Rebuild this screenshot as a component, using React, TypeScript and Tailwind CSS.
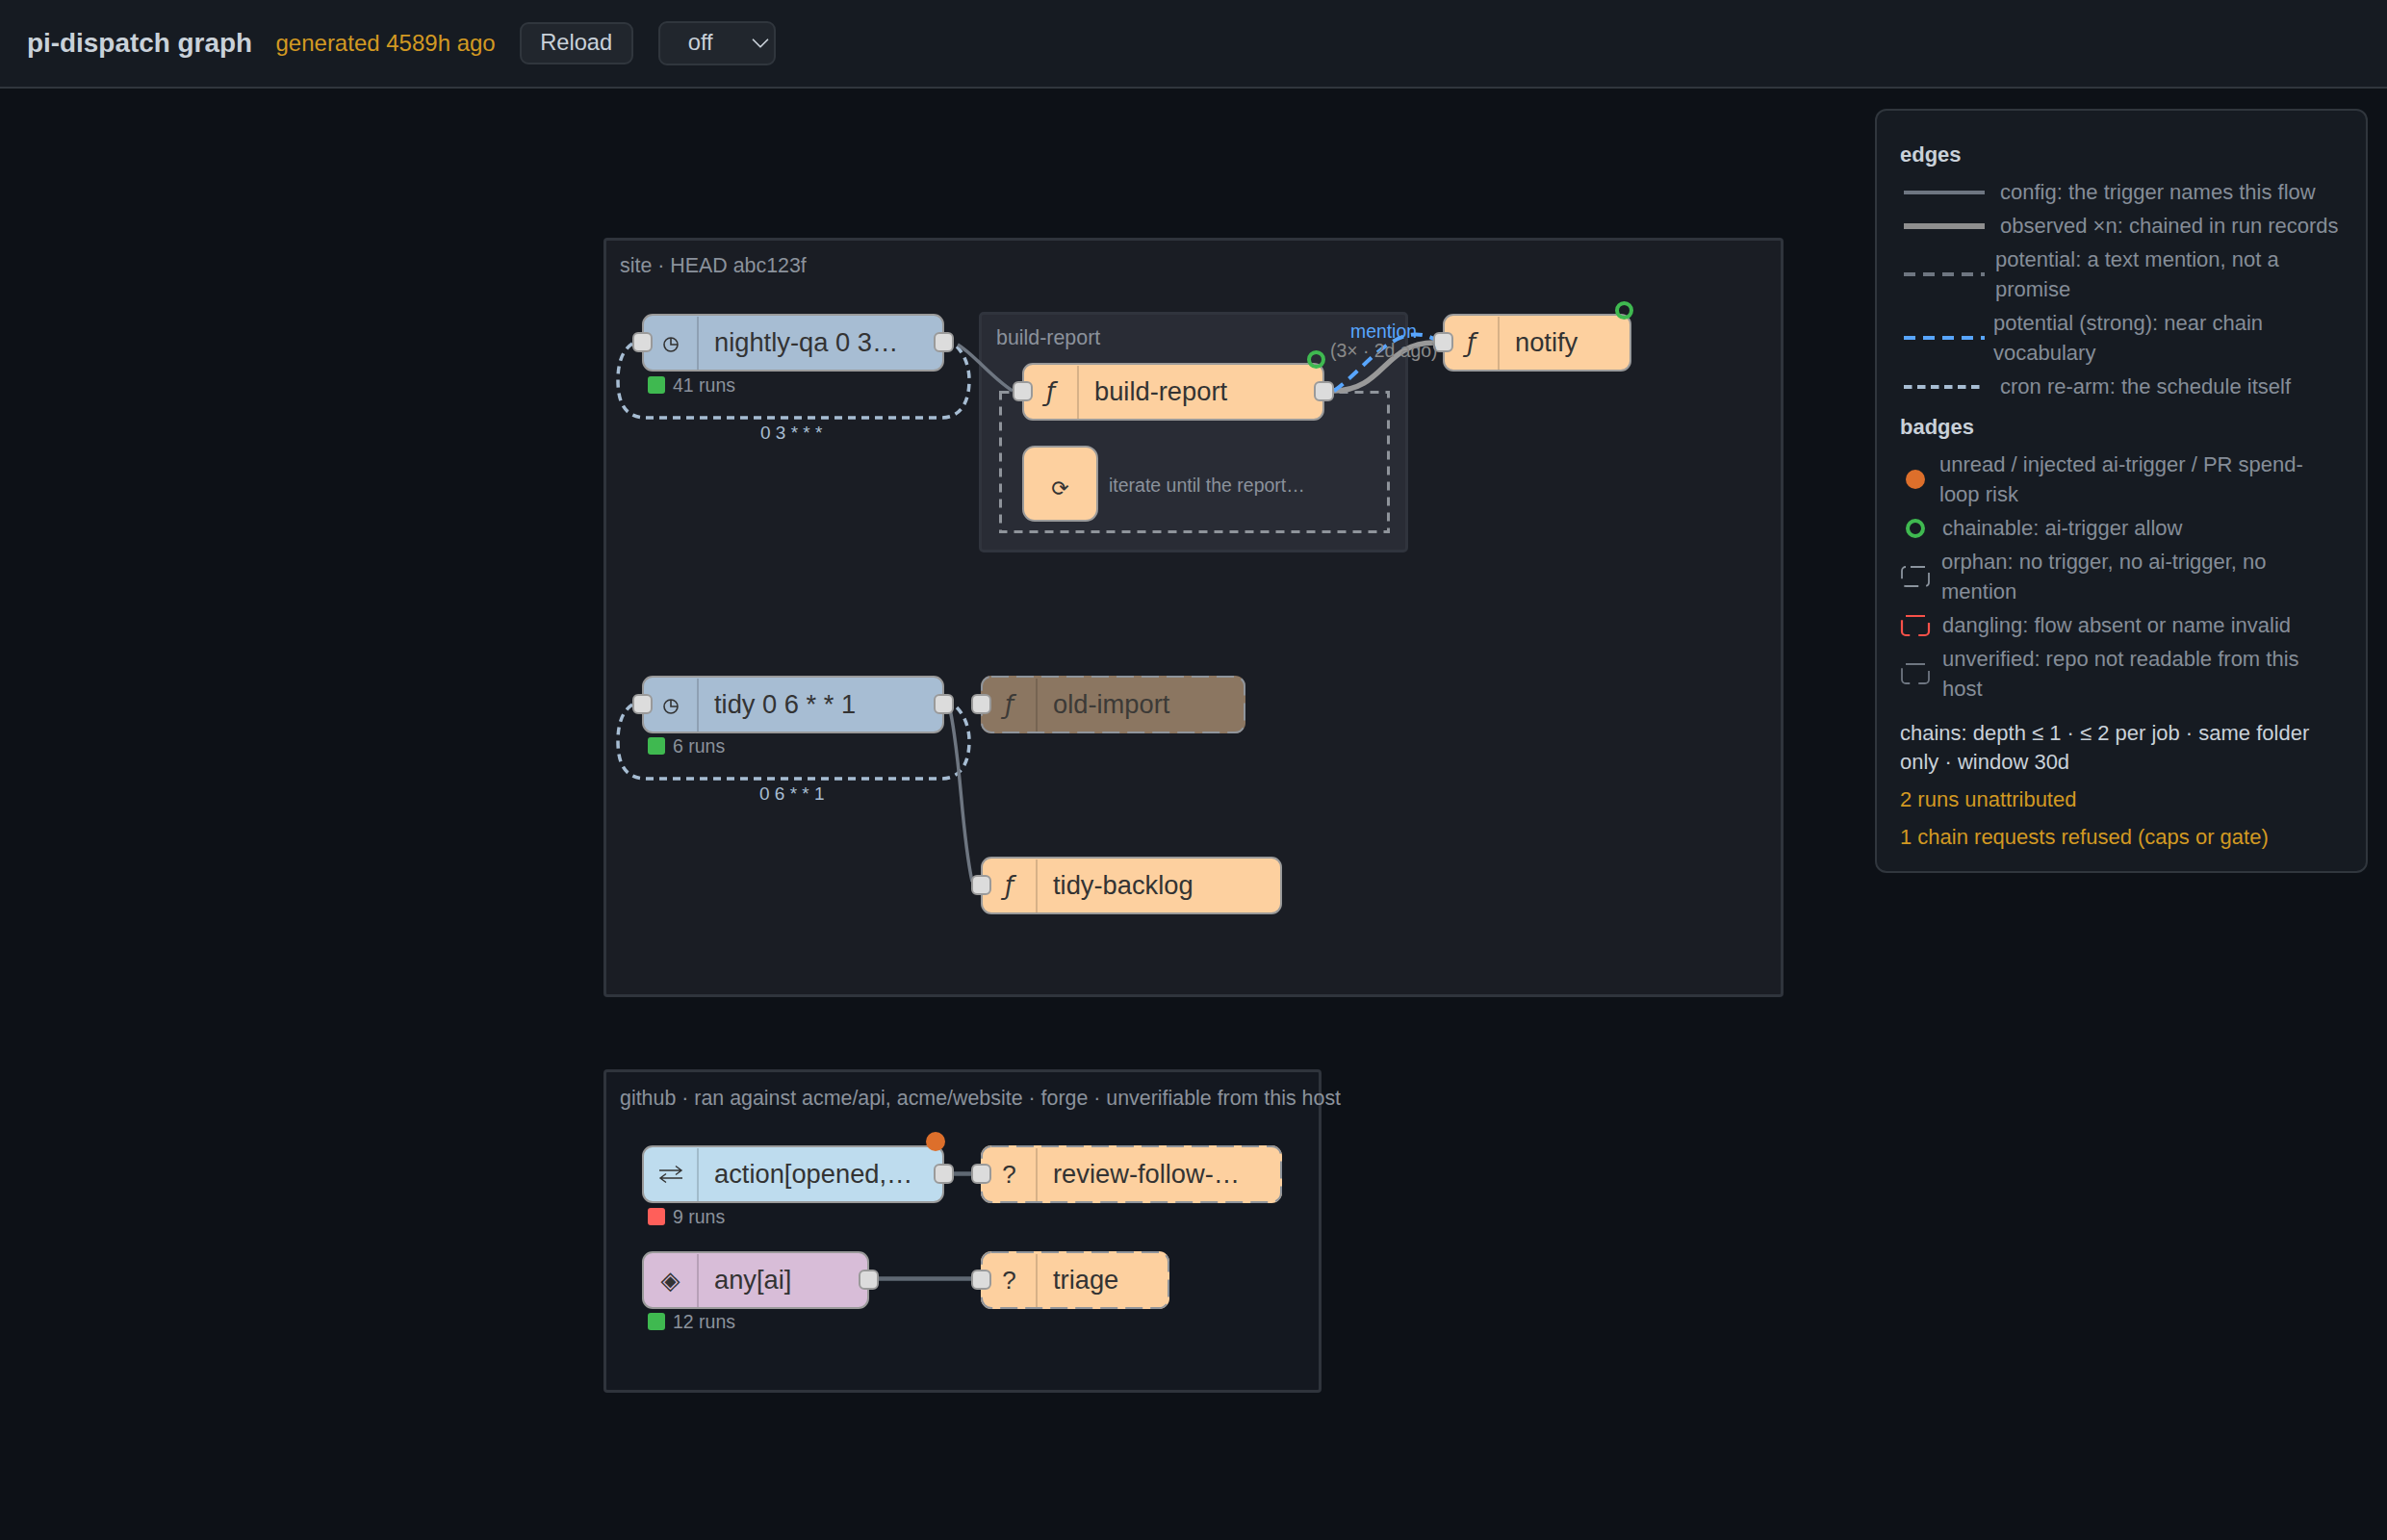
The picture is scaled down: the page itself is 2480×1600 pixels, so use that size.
import type { ReactNode } from 'react';
import { ChevronDown } from 'lucide-react';

const FLOW = 'bg-[#fdd09f]';
const CRON = 'bg-[#a7bdd3]';

function Handle({ className }: { className: string }) {
  return <div className={`absolute top-[17px] h-[21px] w-[21px] rounded-[6px] border-2 border-[#9a9a9a] bg-[#dcdcdc] ${className}`} />;
}

function ClockIcon() {
  return (
    <svg width="18" height="18" viewBox="0 0 18 18" fill="none" stroke="#333" strokeWidth="1.6" className="mt-[4px]">
      <circle cx="9" cy="9" r="7" />
      <path d="M9 2v7h7" />
    </svg>
  );
}

function SwapIcon() {
  return (
    <svg width="26" height="20" viewBox="0 0 26 20" fill="none" stroke="#333" strokeWidth="1.4">
      <path d="M1 6H24M18 1.5l6 4.5-6 4.5" />
      <path d="M25 14H2M8 9.5l-6 4.5 6 4.5" />
    </svg>
  );
}

function Node({
  pos, color, icon, label, w, dashed, left = true, right = false, dim,
}: {
  pos: string; color: string; icon: ReactNode; label: string; w: number;
  dashed?: boolean; left?: boolean; right?: boolean; dim?: boolean;
}) {
  return (
    <div className={`absolute z-20 h-[60px] rounded-[11px] ${pos} ${color} border-2 ${dashed ? 'border-transparent' : 'border-[#9a9a9a]'}`}>
      {dashed && (
        <svg className="absolute -top-[2px] -left-[2px]" width={w} height={60} fill="none">
          <rect x="1" y="1" width={w - 2} height="58" rx="10" stroke="#8f949b" strokeWidth="2" strokeDasharray="18 8" />
        </svg>
      )}
      <div className={`flex h-full items-center ${dim ? 'text-[#3c3a37]' : 'text-[#333333]'}`}>
        <div className="flex h-[55px] w-[57px] shrink-0 items-center justify-center border-r-2 border-[#00000026] text-[26px] leading-none [font-family:'DejaVu_Sans',sans-serif]">
          {icon}
        </div>
        <span className="pl-[16px] text-[27.3px] whitespace-nowrap">{label}</span>
      </div>
      {left && <Handle className="-left-[12px]" />}
      {right && <Handle className="-right-[12px]" />}
    </div>
  );
}

function Runs({ pos, color, label }: { pos: string; color: string; label: string }) {
  return (
    <div className={`absolute z-20 flex items-center gap-[8px] text-[19.5px] leading-[18px] text-[#8b929c] ${pos}`}>
      <div className={`h-[18px] w-[18px] rounded-[3px] ${color}`} />
      <span>{label}</span>
    </div>
  );
}

function EdgeRow({ line, text, textClass }: { line: ReactNode; text: string; textClass: string }) {
  return (
    <div className="flex items-center pl-[4px]">
      <svg width="84" height="8" className="shrink-0" viewBox="0 0 84 8">{line}</svg>
      <span className={`min-w-0 ${textClass}`}>{text}</span>
    </div>
  );
}

function BadgeRow({ icon, text, textClass }: { icon: ReactNode; text: string; textClass: string }) {
  return (
    <div className="flex items-center">
      <svg width="32" height="24" className="shrink-0" viewBox="0 0 32 24" fill="none">{icon}</svg>
      <span className={`min-w-0 ${textClass}`}>{text}</span>
    </div>
  );
}

const CRON_LOOP = 'C645 365 642 380 642 395 C642 420 650 434 672 434 L978 434 C1000 434 1007 415 1007 395 C1007 378 1000 365 992 358';

export default function App() {
  return (
    <div className="flex h-[1600px] w-[2480px] flex-col overflow-hidden bg-[#0d1117] [font-family:'Liberation_Sans',Arial,sans-serif]">
      <header className="flex h-[92px] shrink-0 items-center border-b-2 border-[#30363d] bg-[#161b22] pl-[28px]">
        <h1 className="text-[27.9px] font-bold text-[#c9d1d9]">pi-dispatch graph</h1>
        <span className="ml-[24.5px] text-[24px] text-[#d29922]">generated 4589h ago</span>
        <button className="ml-[25px] h-[44px] w-[118px] rounded-[9px] border-2 border-[#30363d] bg-[#21262d] text-[23.7px] text-[#c9d1d9]">Reload</button>
        <div className="relative ml-[26px] h-[46px] w-[122px]">
          <select className="h-full w-full appearance-none rounded-[9px] border-2 border-[#30363d] bg-[#21262d] pl-[29px] text-[23.7px] text-[#c9d1d9]">
            <option>off</option>
          </select>
          <ChevronDown className="pointer-events-none absolute top-[8px] right-[1px] text-[#c9d1d9]" size={30} strokeWidth={1.4} />
        </div>
      </header>

      <main className="relative flex-1">
        {/* frames */}
        <section className="absolute top-[155px] left-[627px] h-[789px] w-[1226px] rounded-[4px] border-[3px] border-[#2f343c] bg-[#1a1d24] px-[14px] pt-[10px] text-[21.4px] text-[#8b929c]">
          site · HEAD abc123f
        </section>
        <section className="absolute top-[1019px] left-[627px] h-[336px] w-[746px] rounded-[4px] border-[3px] border-[#2f343c] bg-[#141820] pt-[11px] pl-[14px] text-[21.4px] whitespace-nowrap text-[#8b929c]">
          github · ran against acme/api, acme/website · forge · unverifiable from this host
        </section>
        <section className="absolute top-[232px] left-[1017px] h-[250px] w-[446px] rounded-[5px] border-[3px] border-[#30343d] bg-[#292c35] pt-[8px] pl-[15px] text-[21.4px] text-[#8b929c]">
          build-report
        </section>

        {/* edges */}
        <svg className="pointer-events-none absolute top-0 left-0 z-10" width="2480" height="1508" viewBox="0 92 2480 1508" fill="none">
          <rect x="1039.5" y="407.5" width="403" height="145" stroke="#8f949b" strokeWidth="3" strokeDasharray="9 7" />
          <path d={`M657 357 ${CRON_LOOP}`} stroke="#a7bdd3" strokeWidth="3.5" strokeDasharray="8 6" />
          <path d={`M657 357 ${CRON_LOOP}`} transform="translate(0 375)" stroke="#a7bdd3" strokeWidth="3.5" strokeDasharray="8 6" />
          <path d="M995 358 C1012 368 1030 392 1052 406" stroke="#6e7681" strokeWidth="3.5" />
          <path d="M1386 406 C1438 406 1438 356 1490 356" stroke="#999999" strokeWidth="5.5" />
          <path d="M1386 406 C1420 382 1450 332 1490 352" stroke="#58a6ff" strokeWidth="4" strokeDasharray="12 8" />
          <path d="M986 732 C999 790 998 860 1010 916" stroke="#6e7681" strokeWidth="3.5" />
          <path d="M991 1219.5 L1009 1219.5" stroke="#5f6873" strokeWidth="4.5" />
          <path d="M913 1328.5 L1009 1328.5" stroke="#5f6873" strokeWidth="4.5" />
        </svg>

        {/* edge labels */}
        <span className="absolute top-[241px] left-[1403px] z-30 text-[19.4px] leading-[22px] text-[#58a6ff]">mention</span>
        <span className="absolute top-[261px] left-[1382px] z-30 text-[19.4px] leading-[22px] text-[#8a8a8a]">(3× · 2d ago)</span>
        <span className="absolute top-[347px] left-[790px] z-20 text-[19px] leading-[22px] text-[#a7bdd3]">0 3 * * *</span>
        <span className="absolute top-[722px] left-[789px] z-20 text-[19px] leading-[22px] text-[#a7bdd3]">0 6 * * 1</span>

        {/* nodes */}
        <Node pos="top-[234px] left-[667px] w-[314px]" w={314} color={CRON} icon={<ClockIcon />} label="nightly-qa 0 3…" right />
        <Runs pos="top-[299px] left-[673px]" color="bg-[#3fb950]" label="41 runs" />

        <Node pos="top-[285px] left-[1062px] w-[314px]" w={314} color={FLOW} icon={<span className="italic">ƒ</span>} label="build-report" right />
        <div className="absolute top-[371px] left-[1062px] z-20 flex h-[79px] w-[79px] items-center justify-center rounded-[13px] border-2 border-[#9a9a9a] bg-[#fdd09f] pt-[10px] text-[22px] text-[#333333] [font-family:'DejaVu_Sans',sans-serif]">⟳</div>
        <span className="absolute top-[400px] left-[1152px] z-20 text-[19.5px] leading-[24px] text-[#8b929c]">iterate until the report…</span>
        <Node pos="top-[234px] left-[1499px] w-[196px]" w={196} color={FLOW} icon={<span className="italic">ƒ</span>} label="notify" />

        <Node pos="top-[610px] left-[667px] w-[314px]" w={314} color={CRON} icon={<ClockIcon />} label="tidy 0 6 * * 1" right />
        <Runs pos="top-[674px] left-[673px]" color="bg-[#3fb950]" label="6 runs" />
        <Node pos="top-[610px] left-[1019px] w-[275px]" w={275} color="bg-[#8b7661]" icon={<span className="italic">ƒ</span>} label="old-import" dashed dim />
        <Node pos="top-[798px] left-[1019px] w-[313px]" w={313} color={FLOW} icon={<span className="italic">ƒ</span>} label="tidy-backlog" />

        <Node pos="top-[1098px] left-[667px] w-[314px]" w={314} color="bg-[#bedcee]" icon={<SwapIcon />} label="action[opened,…" right left={false} />
        <Runs pos="top-[1163px] left-[673px]" color="bg-[#ff5f5a]" label="9 runs" />
        <Node pos="top-[1098px] left-[1019px] w-[313px]" w={313} color={FLOW} icon={<span className="[font-family:'Liberation_Sans',sans-serif]">?</span>} label="review-follow-…" dashed />
        <Node pos="top-[1208px] left-[667px] w-[236px]" w={236} color="bg-[#d8bdd8]" icon="◈" label="any[ai]" right left={false} />
        <Runs pos="top-[1272px] left-[673px]" color="bg-[#3fb950]" label="12 runs" />
        <Node pos="top-[1208px] left-[1019px] w-[196px]" w={196} color={FLOW} icon={<span className="[font-family:'Liberation_Sans',sans-serif]">?</span>} label="triage" dashed />

        {/* corner badges */}
        <div className="absolute top-[272px] left-[1358px] z-30 h-[19px] w-[19px] rounded-full border-4 border-[#3fb950]" />
        <div className="absolute top-[221px] left-[1678px] z-30 h-[19px] w-[19px] rounded-full border-4 border-[#3fb950]" />
        <div className="absolute top-[1084px] left-[962px] z-30 h-[20px] w-[20px] rounded-full bg-[#dd6f2b]" />

        {/* legend */}
        <aside className="absolute top-[21px] right-[20px] z-40 w-[512px] rounded-[12px] border-2 border-[#30363d] bg-[#161b22] pt-[30px] pr-[27px] pb-[20px] pl-[24px] text-[22px] leading-[31px] text-[#858d98]">
          <h2 className="mb-[8px] font-bold text-[#c9d1d9]">edges</h2>
          <div className="flex flex-col gap-[4px]">
            <EdgeRow textClass="ml-[16px]" text="config: the trigger names this flow" line={<path d="M0 4H84" stroke="#6e7681" strokeWidth="4" />} />
            <EdgeRow textClass="ml-[16px]" text="observed ×n: chained in run records" line={<path d="M0 4H84" stroke="#8f8f8f" strokeWidth="6" />} />
            <EdgeRow textClass="ml-[11px]" text="potential: a text mention, not a promise" line={<path d="M0 4H84" stroke="#6e7681" strokeWidth="4" strokeDasharray="12 8" />} />
            <EdgeRow textClass="ml-[9px]" text="potential (strong): near chain vocabulary" line={<path d="M0 4H84" stroke="#58a6ff" strokeWidth="4" strokeDasharray="12 8" />} />
            <EdgeRow textClass="ml-[16px]" text="cron re-arm: the schedule itself" line={<path d="M0 4H79" stroke="#a7bdd3" strokeWidth="4" strokeDasharray="8.5 5.5" />} />
          </div>

          <h2 className="mt-[11px] mb-[8px] font-bold text-[#c9d1d9]">badges</h2>
          <div className="flex flex-col gap-[4px]">
            <BadgeRow textClass="ml-[9px]" text="unread / injected ai-trigger / PR spend-loop risk" icon={<circle cx="16" cy="12" r="10" fill="#dd6f2b" />} />
            <BadgeRow textClass="ml-[12px]" text="chainable: ai-trigger allow" icon={<circle cx="16" cy="12" r="8" stroke="#3fb950" strokeWidth="4" />} />
            <BadgeRow textClass="ml-[11px]" text="orphan: no trigger, no ai-trigger, no mention" icon={<rect x="2" y="2" width="28" height="20" rx="4" stroke="#8b949e" strokeWidth="1.8" strokeDasharray="15 8" strokeDashoffset="-5" />} />
            <BadgeRow textClass="ml-[12px]" text="dangling: flow absent or name invalid" icon={<rect x="2" y="2" width="28" height="20" rx="4" stroke="#f85149" strokeWidth="2.2" strokeDasharray="22 9" strokeDashoffset="2" />} />
            <BadgeRow textClass="ml-[12px]" text="unverified: repo not readable from this host" icon={<rect x="2" y="2" width="28" height="20" rx="4" stroke="#6e7681" strokeWidth="1.8" strokeDasharray="22 9" strokeDashoffset="2" />} />
          </div>

          <p className="mt-[16px] leading-[30px] text-[#c9d1d9]">chains: depth ≤ 1 · ≤ 2 per job · same folder only · window 30d</p>
          <p className="mt-[8px] text-[#d29922]">2 runs unattributed</p>
          <p className="mt-[8px] text-[#d29922]">1 chain requests refused (caps or gate)</p>
        </aside>
      </main>
    </div>
  );
}
